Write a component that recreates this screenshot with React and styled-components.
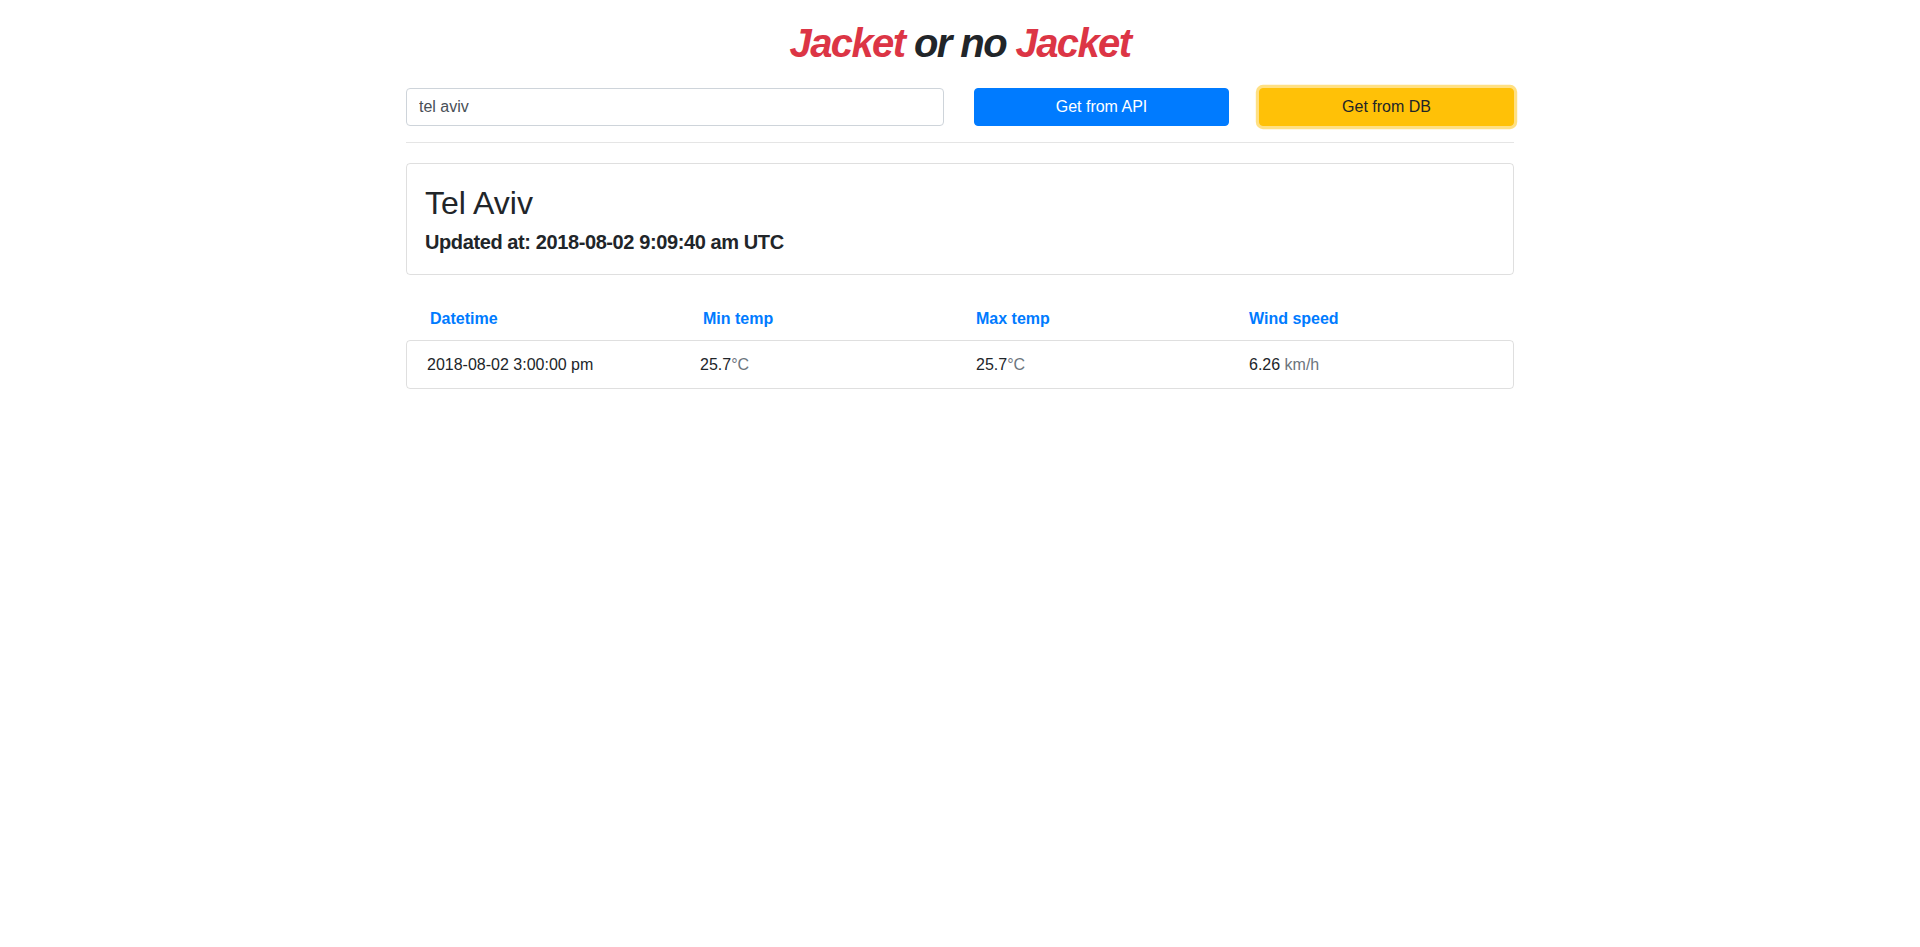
import React from "react";
import styled, { createGlobalStyle } from "styled-components";

const GlobalStyle = createGlobalStyle`
  * {
    box-sizing: border-box;
  }
  body {
    margin: 0;
    background: #fff;
    color: #212529;
    font-family: "Liberation Sans", Arial, sans-serif;
    font-size: 16px;
    line-height: 1.5;
  }
`;

const Container = styled.div`
  max-width: 1140px;
  margin: 0 auto;
  padding: 0 16px;
`;

const Title = styled.h1`
  margin: 19px 0 21px;
  text-align: center;
  font-size: 40px;
  line-height: 48px;
  font-style: italic;
  font-weight: 700;
  letter-spacing: -1.6px;
  color: #212529;
`;

const Red = styled.span`
  color: #dc3545;
`;

const SearchRow = styled.div`
  display: grid;
  grid-template-columns: 538px 1fr 1fr;
  column-gap: 30px;
`;

const Input = styled.input`
  height: 38px;
  padding: 6px 12px;
  border: 1px solid #ced4da;
  border-radius: 4px;
  font-family: inherit;
  font-size: 16px;
  color: #495057;
  outline: none;
`;

const Button = styled.button`
  height: 38px;
  border: 1px solid ${(p) => p.$bg};
  border-radius: 4px;
  background: ${(p) => p.$bg};
  color: ${(p) => p.$fg};
  font-family: inherit;
  font-size: 16px;
  cursor: pointer;
  box-shadow: ${(p) => (p.$focused ? "0 0 0 3.2px rgba(255, 193, 7, 0.5)" : "none")};
`;

const Divider = styled.hr`
  margin: 16px 0 20px;
  border: 0;
  border-top: 1px solid rgba(0, 0, 0, 0.1);
`;

const Card = styled.div`
  border: 1px solid rgba(0, 0, 0, 0.125);
  border-radius: 4px;
  padding: 20px 20px 20px 18px;
`;

const City = styled.h2`
  margin: 0 0 8px;
  font-size: 32px;
  line-height: 1.2;
  font-weight: 400;
`;

const Updated = styled.h5`
  margin: 0;
  font-size: 20px;
  line-height: 1.2;
  font-weight: 700;
  letter-spacing: -0.4px;
`;

const Columns = styled.div`
  display: grid;
  grid-template-columns: repeat(4, 273px);
`;

const HeaderRow = styled(Columns)`
  margin: 31px 0 9px;
  padding: 1px 0 0 24px;
  color: #007bff;
  font-weight: 700;
  line-height: 24px;
`;

const DataRow = styled(Columns)`
  border: 1px solid rgba(0, 0, 0, 0.125);
  border-radius: 4px;
  padding: 12px 0 11px 20px;
  line-height: 24px;
`;

const Cell = styled.div`
  padding-left: ${(p) => p.$shift || 0}px;
`;

const Muted = styled.span`
  color: #6c757d;
`;

const forecast = [
  { datetime: "2018-08-02 3:00:00 pm", min: "25.7", max: "25.7", wind: "6.26" },
];

export default function App() {
  return (
    <>
      <GlobalStyle />
      <Container>
        <Title>
          <Red>Jacket</Red> or no <Red>Jacket</Red>
        </Title>
        <SearchRow>
          <Input defaultValue="tel aviv" />
          <Button $bg="#007bff" $fg="#fff">
            Get from API
          </Button>
          <Button $bg="#ffc107" $fg="#212529" $focused>
            Get from DB
          </Button>
        </SearchRow>
        <Divider />
        <Card>
          <City>Tel Aviv</City>
          <Updated>Updated at: 2018-08-02 9:09:40 am UTC</Updated>
        </Card>
        <HeaderRow>
          <div>Datetime</div>
          <div>Min temp</div>
          <div>Max temp</div>
          <div>Wind speed</div>
        </HeaderRow>
        {forecast.map((f) => (
          <DataRow key={f.datetime}>
            <Cell>{f.datetime}</Cell>
            <Cell>
              {f.min}
              <Muted>°C</Muted>
            </Cell>
            <Cell $shift={3}>
              {f.max}
              <Muted>°C</Muted>
            </Cell>
            <Cell $shift={3}>
              {f.wind} <Muted>km/h</Muted>
            </Cell>
          </DataRow>
        ))}
      </Container>
    </>
  );
}
